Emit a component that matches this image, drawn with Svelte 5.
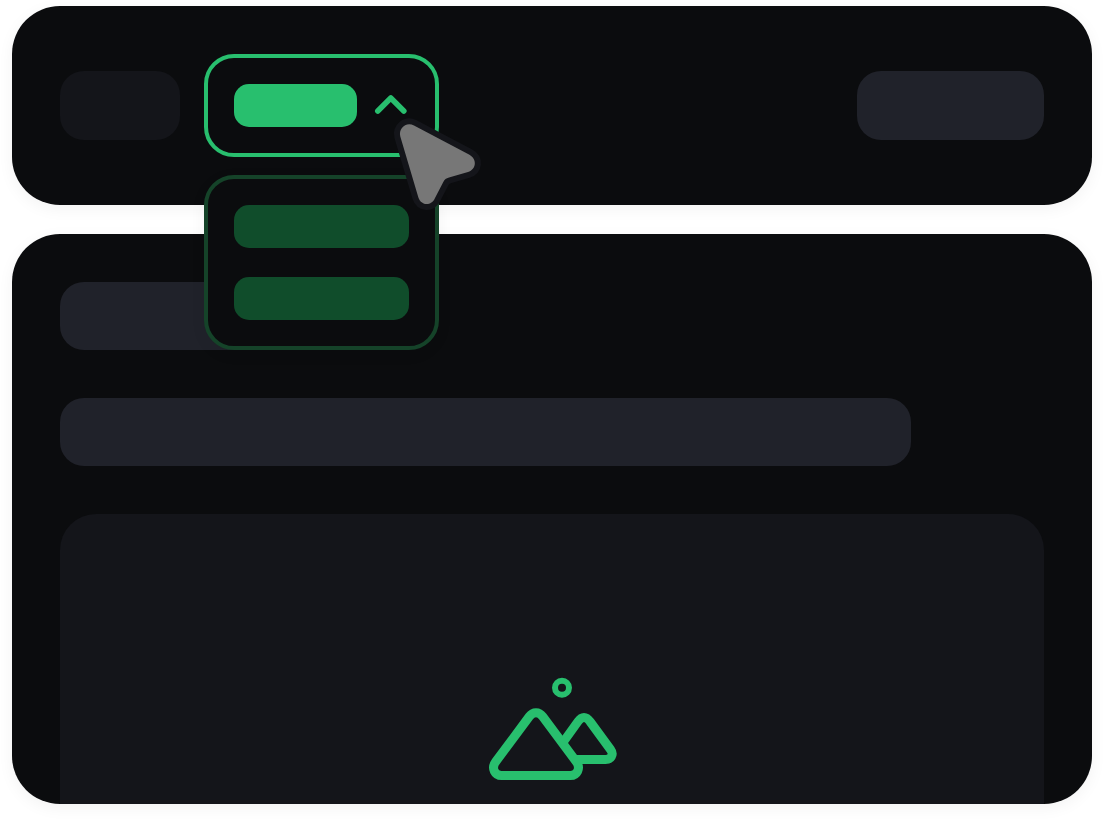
<script>
  let open = $state(true);
</script>

<div class="page">
  <header class="panel bar">
    <div class="block logo"></div>
    <div class="menu">
      <button
        class="trigger"
        type="button"
        aria-label="Menu"
        aria-expanded={open}
        onclick={() => (open = !open)}
      >
        <span class="label"></span>
        <svg class="chevron" viewBox="0 0 34 23" aria-hidden="true">
          <path d="M3.8 17 16.8 4 29.8 17" />
        </svg>
      </button>
      {#if open}
        <ul class="dropdown">
          <li></li>
          <li></li>
        </ul>
      {/if}
      <svg class="cursor" viewBox="0 0 100 100" aria-hidden="true">
        <path
          d="M13.3 27.5C11.3 19.5 19 12.5 27 16.5L82 45.5C90.5 50 89.5 60.5 81 63L62 68.5C59 69.5 57.7 70.3 56.3 73L48 89C44.5 97.5 34 97 31.3 88.3Z"
        />
      </svg>
    </div>
    <div class="block action"></div>
  </header>

  <main class="panel content">
    <div class="block title"></div>
    <div class="block line"></div>
    <div class="media">
      <svg viewBox="0 0 130 104" aria-hidden="true">
        <circle cx="75" cy="10.7" r="7" />
        <path
          d="M42.3 39.5 8.5 85C4 91.5 8 98.5 14.5 98.5H83.5C90 98.5 94 91.5 89.5 85L55.7 39.5C52 34.5 46 34.5 42.3 39.5Z"
        />
        <path d="M77 64 91 44.5C94.8 39 99.2 39 103 44.5L123.5 72.5C127.5 78 123.5 82.5 118.5 82.5H89.5" />
      </svg>
    </div>
  </main>
</div>

<style>
  :global(body) {
    margin: 0;
    background: #fff;
    font-family: Inter, sans-serif;
  }

  .page {
    display: flex;
    flex-direction: column;
    gap: 29px;
    padding: 6px 12px 18px;
  }

  .panel {
    box-sizing: border-box;
    padding: 48px;
    border-radius: 48px;
    background: #0b0c0e;
    box-shadow: 0 4px 16px rgba(0, 0, 0, 0.05);
  }

  .bar {
    position: relative;
    z-index: 1;
    display: flex;
    align-items: center;
    gap: 24px;
  }

  .block {
    height: 68px;
    border-radius: 24px;
    background: #20222a;
  }

  .bar .block {
    height: 69px;
  }

  .bar .logo {
    width: 120px;
    background: #14151a;
  }

  .action {
    width: 187px;
    margin-left: auto;
  }

  .menu {
    position: relative;
    width: 235px;
  }

  .trigger,
  .dropdown {
    box-sizing: border-box;
    width: 100%;
    padding: 26px;
    border: 4px solid #28bf6e;
    border-radius: 30px;
    background: #0b0c0e;
  }

  .trigger {
    display: flex;
    align-items: center;
    gap: 17px;
    cursor: pointer;
  }

  .label {
    width: 123px;
    height: 43px;
    border-radius: 15px;
    background: #28bf6e;
  }

  .chevron {
    width: 34px;
    height: 23px;
  }

  .dropdown {
    position: absolute;
    top: 100%;
    left: 0;
    display: grid;
    gap: 29px;
    margin: 18px 0 0;
    border-color: #154329;
    list-style: none;
    box-shadow: 0 4px 16px rgba(0, 0, 0, 0.05);
  }

  .dropdown li {
    height: 43px;
    border-radius: 15px;
    background: #104d2b;
  }

  svg {
    fill: none;
    stroke: #28bf6e;
    stroke-linecap: round;
    stroke-linejoin: round;
  }

  .chevron path {
    stroke-width: 5.6;
  }

  .cursor {
    position: absolute;
    top: 55px;
    left: 183px;
    width: 100px;
    height: 100px;
    overflow: visible;
    pointer-events: none;
  }

  .cursor path {
    fill: #777;
    stroke: #14151a;
    stroke-width: 12;
    paint-order: stroke;
  }

  .content {
    display: flex;
    flex-direction: column;
    gap: 48px;
    padding-bottom: 0;
    overflow: hidden;
  }

  .title {
    width: 32%;
  }

  .line {
    width: 86.5%;
  }

  .media {
    display: flex;
    justify-content: center;
    padding: 163px 0 23px;
    border-radius: 36px 36px 0 0;
    background: #14151a;
  }

  .media svg {
    width: 130px;
    height: 104px;
  }

  .media circle {
    stroke-width: 6;
  }

  .media path {
    stroke-width: 9;
  }
</style>
